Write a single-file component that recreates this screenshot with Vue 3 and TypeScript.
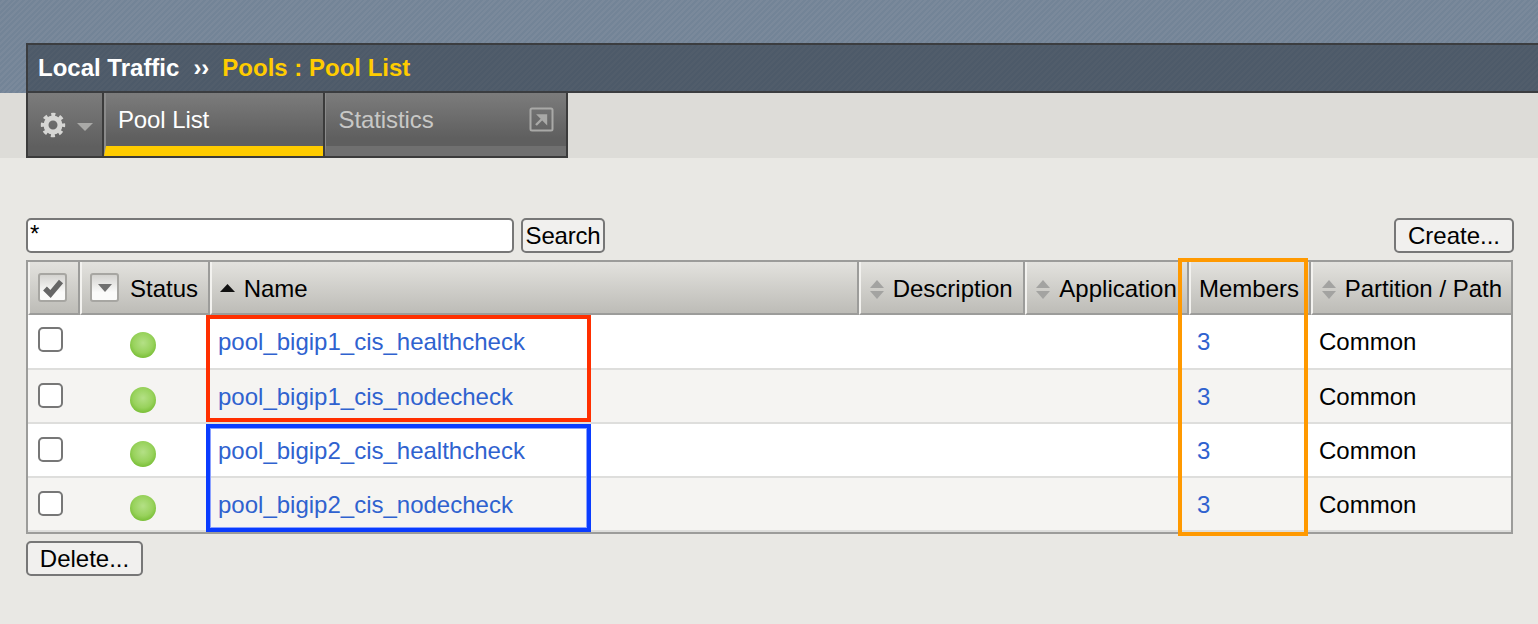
<script setup lang="ts">
interface Pool { name: string; members: number; path: string }
const pools: Pool[] = [
  { name: 'pool_bigip1_cis_healthcheck', members: 3, path: 'Common' },
  { name: 'pool_bigip1_cis_nodecheck', members: 3, path: 'Common' },
  { name: 'pool_bigip2_cis_healthcheck', members: 3, path: 'Common' },
  { name: 'pool_bigip2_cis_nodecheck', members: 3, path: 'Common' },
]
</script>

<template>
  <div class="page">
    <header class="banner">
      <div class="crumb">
        <span class="crumb-root">Local Traffic</span>
        <span class="crumb-sep">››</span>
        <span class="crumb-current">Pools : Pool List</span>
      </div>
    </header>

    <nav class="nav-strip">
      <div class="tabs">
        <div class="tab tab-gear">
          <svg width="26" height="26" viewBox="0 0 26 26" class="gear">
            <circle cx="13" cy="13" r="10.2" fill="none" stroke="#d6d6d4" stroke-width="4" stroke-dasharray="4 4.01" stroke-dashoffset="2" />
            <circle cx="13" cy="13" r="7" fill="none" stroke="#d6d6d4" stroke-width="5" />
          </svg>
          <svg width="16" height="8" viewBox="0 0 16 8" class="gear-caret"><path d="M0 0H16L8 8Z" fill="#a9a9a7" /></svg>
        </div>
        <div class="tab tab-active">
          <span class="tab-label">Pool List</span>
        </div>
        <div class="tab tab-stat">
          <span class="tab-label">Statistics</span>
          <svg width="25" height="25" viewBox="0 0 25 25" class="popout">
            <rect x="1.500" y="1.500" width="22" height="22" rx="1.500" fill="none" stroke="#a9a9a7" stroke-width="2" />
            <path d="M7 18L15 10M10 8.500H17V15.500Z" fill="#a9a9a7" stroke="#a9a9a7" stroke-width="2.400" />
          </svg>
        </div>
      </div>
    </nav>

    <main class="content">
      <div class="toolbar">
        <div class="search">
          <input class="search-input" type="text" value="*" />
          <button class="btn btn-search" type="button">Search</button>
        </div>
        <button class="btn btn-create" type="button">Create...</button>
      </div>

      <div class="table-wrap">
        <table class="grid">
          <colgroup>
            <col style="width: 52px" />
            <col style="width: 130px" />
            <col style="width: 649px" />
            <col style="width: 166px" />
            <col style="width: 164px" />
            <col style="width: 122px" />
            <col style="width: 200px" />
          </colgroup>
          <thead>
            <tr>
              <th class="th-check">
                <div class="th-row">
                  <span class="hd-box">
                    <svg width="24" height="22" viewBox="0 0 24 22"><path d="M4 11.500L9.500 17L20 4.500" fill="none" stroke="#666" stroke-width="5.400" /></svg>
                  </span>
                </div>
              </th>
              <th class="th-status">
                <div class="th-row">
                  <span class="hd-box">
                    <svg width="14" height="8" viewBox="0 0 14 8"><path d="M0 0H14L7 8Z" fill="#707070" /></svg>
                  </span>
                  <span>Status</span>
                </div>
              </th>
              <th class="th-name">
                <svg class="sort-up" width="15" height="8" viewBox="0 0 15 8"><path d="M0 8H15L7.500 0Z" fill="#111" /></svg>
                Name
              </th>
              <th
                v-for="label in ['Description', 'Application']"
                :key="label"
                class="th-sort"
                :class="{ 'th-app': label === 'Application' }"
              >
                <svg class="sort" width="14" height="20" viewBox="0 0 14 20"><path d="M0 8H14L7 0ZM0 11H14L7 19Z" fill="#a3a3a1" /></svg>
                {{ label }}
              </th>
              <th class="th-members">Members</th>
              <th class="th-sort th-path">
                <svg class="sort" width="14" height="20" viewBox="0 0 14 20"><path d="M0 8H14L7 0ZM0 11H14L7 19Z" fill="#a3a3a1" /></svg>
                Partition / Path
              </th>
            </tr>
          </thead>
          <tbody>
            <tr v-for="pool in pools" :key="pool.name">
              <td class="td-check"><input class="check" type="checkbox" /></td>
              <td class="td-status"><span class="dot"></span></td>
              <td class="td-text"><a class="link" href="#">{{ pool.name }}</a></td>
              <td></td>
              <td></td>
              <td class="td-text"><a class="link" href="#">{{ pool.members }}</a></td>
              <td class="td-text">{{ pool.path }}</td>
            </tr>
          </tbody>
        </table>
        <div class="mark mark-red"></div>
        <div class="mark mark-blue"></div>
        <div class="mark mark-orange"></div>
      </div>

      <button class="btn btn-delete" type="button">Delete...</button>
    </main>
  </div>
</template>

<style>
html, body { margin: 0; background: #e9e8e4; }
</style>

<style scoped>
.page {
  width: 1538px;
  height: 624px;
  overflow: hidden;
  background: #e9e8e4;
  font-family: "Liberation Sans", Arial, sans-serif;
  font-size: 24px;
  color: #000;
}
.banner {
  height: 93px;
  box-sizing: border-box;
  padding: 43px 0 0 26px;
  background: repeating-linear-gradient(135deg, #738497 0 2px, #7a899b 2px 4px);
}
.crumb {
  height: 50px;
  box-sizing: border-box;
  display: flex;
  align-items: center;
  padding: 0 0 0 10px;
  border: 2px solid #3b3d40;
  border-right: 0;
  background: repeating-linear-gradient(135deg, #4d5a69 0 2px, #515d6b 2px 4px);
  font-weight: bold;
  white-space: nowrap;
}
.crumb-root { color: #fff; }
.crumb-sep { color: #fff; margin: 0 13px 0 14px; }
.crumb-current { color: #ffcc00; }
.nav-strip {
  height: 65px;
  box-sizing: border-box;
  padding-left: 26px;
  background: #dddcd8;
}
.tabs {
  display: flex;
  width: 542px;
  height: 65px;
  box-sizing: border-box;
  border: 2px solid #3b3b3b;
  border-top: 0;
  background: #3b3b3b;
}
.tab {
  position: relative;
  height: 63px;
  box-sizing: border-box;
  background: linear-gradient(#7c7c7c, #5f5f5f 85%);
  color: #fff;
}
.tab-gear {
  width: 75px;
  display: flex;
  align-items: center;
  padding-left: 12px;
  gap: 11px;
  border-right: 1px solid #3b3b3b;
}
.gear { filter: blur(0.5px); flex: none; }
.gear-caret { margin-top: 5px; flex: none; }
.tab-active {
  width: 220px;
  margin-left: 1px;
  margin-right: 2px;
  padding: 12px 0 0 12px;
  border-left: 2px solid #8a8a8a;
  border-bottom: 10px solid #ffcc00;
  background-clip: padding-box;
}
.tab-stat {
  width: 241px;
  padding: 12px 0 0 12px;
  border-bottom: 10px solid #707070;
  color: #c8c8c6;
  border-left: 1px solid #8a8a8a;
}
.tab-label { display: block; line-height: 30px; letter-spacing: -0.08px; }
.popout {
  position: absolute;
  right: 12px;
  top: 14px;
  filter: blur(0.4px);
}
.content {
  padding: 60px 24px 0 26px;
}
.toolbar {
  display: flex;
  justify-content: space-between;
  height: 35px;
  margin-bottom: 7px;
}
.search {
  display: flex;
  gap: 7px;
}
.search-input {
  width: 488px;
  height: 35px;
  box-sizing: border-box;
  border: 2px solid #777;
  border-radius: 5px;
  padding: 0 2px 4px;
  background: #fff;
  font: inherit;
  color: #000;
  outline: none;
}
.btn {
  height: 35px;
  box-sizing: border-box;
  padding: 0;
  border: 2px solid #777;
  border-radius: 5px;
  background: #f1f0ee;
  color: #000;
  font: inherit;
  line-height: 29px;
}
.btn-search { width: 84px; letter-spacing: -0.2px; }
.btn-create { width: 120px; }
.btn-delete {
  display: block;
  width: 117px;
  margin-top: 7px;
}
.table-wrap {
  position: relative;
  width: 1487px;
  box-sizing: border-box;
  border: 2px solid #9c9c9a;
  background: #fff;
}
.grid {
  width: 1483px;
  table-layout: fixed;
  border-collapse: separate;
  border-spacing: 0;
}
thead th {
  height: 53px;
  box-sizing: border-box;
  padding: 2px 0 0 9px;
  border-left: 2px solid #f3f2ef;
  border-right: 2px solid #9c9c9a;
  border-bottom: 2px solid #9c9c9a;
  background: linear-gradient(#e3e2de, #bdbcb7);
  font-weight: normal;
  text-align: left;
  white-space: nowrap;
}
thead th:last-child { border-right: 0; }
.th-check { padding-left: 8px; }
.th-status { padding-left: 8px; }
.th-name { padding-left: 8px; }
.th-members { padding-left: 8px; }
.th-row {
  display: flex;
  align-items: center;
  gap: 11px;
}
.hd-box {
  display: flex;
  flex: none;
  align-items: center;
  justify-content: center;
  width: 29px;
  height: 29px;
  margin-top: -2px;
  box-sizing: border-box;
  border: 2px solid #a7a6a2;
  border-radius: 3px;
  background: linear-gradient(#d4d3d0, #fbfbfa 70%);
}
.sort-up {
  margin-right: 2px;
  vertical-align: 5px;
}
.sort {
  margin-right: 2px;
  vertical-align: -3px;
}
.th-app .sort { margin-right: 4px; }
.th-sort { white-space: nowrap; overflow: hidden; }
tbody td {
  height: 54px;
  box-sizing: border-box;
  padding: 0 0 0 8px;
  border-bottom: 2px solid #dededc;
  background: #fff;
  line-height: 28px;
  white-space: nowrap;
}
tbody tr:first-child td { height: 55px; }
tbody tr:nth-child(even) td { background: #f5f4f2; }
tbody tr:not(:first-child) .td-text { padding-top: 2px; }
tbody .td-check { padding: 0 0 2px 10px; }
tbody tr:first-child .td-check { padding-bottom: 4px; }
tbody .td-status { text-align: center; padding: 6px 5px 0 0; }
tbody tr:first-child .td-status { padding-top: 4px; }
.check {
  appearance: none;
  display: block;
  width: 25px;
  height: 25px;
  box-sizing: border-box;
  margin: 0;
  border: 2px solid #777;
  border-radius: 5px;
  background: #fff;
}
.dot {
  display: inline-block;
  width: 26px;
  height: 26px;
  border-radius: 50%;
  background: radial-gradient(circle at 50% 42%, #b4e086 0, #98d25c 50%, #6fb82a 85%, #62a822 100%);
  vertical-align: middle;
}
.link {
  color: #2f62cf;
  text-decoration: none;
}
.mark {
  position: absolute;
  box-sizing: border-box;
  border-width: 4px;
  border-style: solid;
  pointer-events: none;
}
.mark-red {
  left: 178px;
  top: 53px;
  width: 385px;
  height: 107px;
  border-color: #ff2f00;
}
.mark-blue {
  left: 178px;
  top: 162px;
  width: 385px;
  height: 108px;
  border-color: #0a3cff;
  box-shadow: inset 0 0 0 1px #8aa0ff;
}
.mark-orange {
  left: 1150px;
  top: -4px;
  width: 130px;
  height: 278px;
  border-color: #ff9900;
}
</style>
